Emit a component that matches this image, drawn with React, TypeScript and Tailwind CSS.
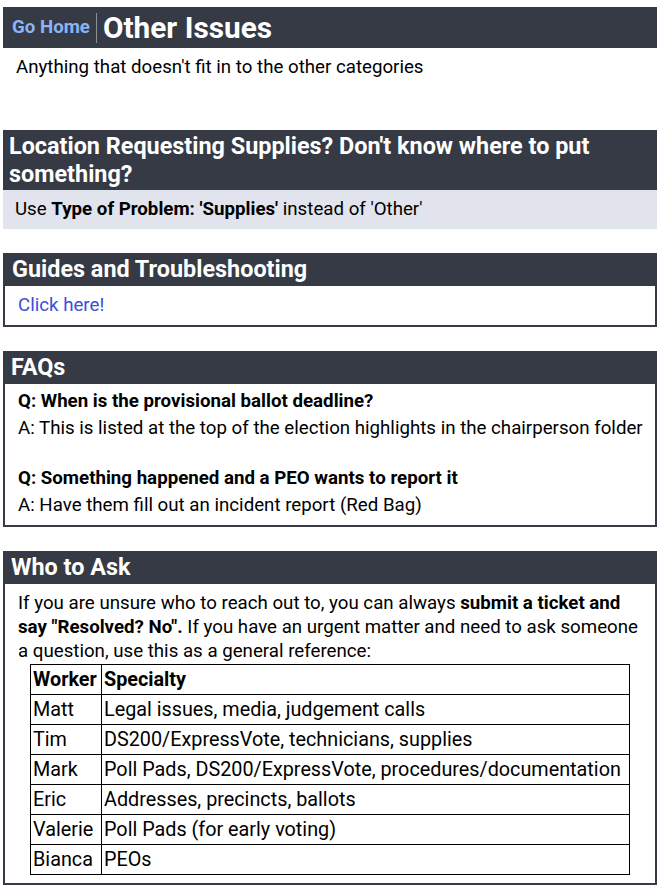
import React from "react";

const rows: [string, string][] = [
  ["Matt", "Legal issues, media, judgement calls"],
  ["Tim", "DS200/ExpressVote, technicians, supplies"],
  ["Mark", "Poll Pads, DS200/ExpressVote, procedures/documentation"],
  ["Eric", "Addresses, precincts, ballots"],
  ["Valerie", "Poll Pads (for early voting)"],
  ["Bianca", "PEOs"],
];

export default function App() {
  return (
    <div
      className="w-[662px] min-h-[896px] bg-white text-black"
      style={{ fontFamily: "Roboto, 'Noto Sans', sans-serif" }}
    >
      <div className="pt-[7px] pl-[3px] w-[657px]">
        <div className="h-[41px] bg-[#353a45] flex items-center">
          <span className="pl-[9px] pr-[6px] text-[18.7px] font-bold text-[#8ab4f8] leading-none">Go Home</span>
          <span className="w-[1px] h-[30px] bg-[#8a8e96]" />
          <span className="pl-[6px] text-[29.8px] font-bold text-white leading-none">Other Issues</span>
        </div>
        <p className="pl-[13px] pt-[7px] text-[18.7px] leading-[24px]">
          Anything that doesn't fit in to the other categories
        </p>

        <div className="mt-[51px]">
          <div className="bg-[#353a45] text-white font-bold text-[23.4px] leading-[28px] px-[6px] pt-[2px] pb-[2px]">
            Location Requesting Supplies? Don't know where to put something?
          </div>
          <div className="bg-[#e1e4ec] h-[39px] flex items-center pl-[12px] text-[18.7px]">
            <span>
              Use <b>Type of Problem: 'Supplies'</b> instead of 'Other'
            </span>
          </div>
        </div>

        <div className="mt-[24px]">
          <div className="bg-[#353a45] text-white font-bold text-[23.4px] h-[33px] flex items-center px-[9px]">
            Guides and Troubleshooting
          </div>
          <div className="border-2 border-t-0 border-[#353a45] h-[41px] flex items-center pl-[13px] text-[18.7px]">
            <a className="text-[#3b4fd8]">Click here!</a>
          </div>
        </div>

        <div className="mt-[24px]">
          <div className="bg-[#353a45] text-white font-bold text-[23.4px] h-[33px] flex items-center px-[8px]">
            FAQs
          </div>
          <div className="border-2 border-t-0 border-[#353a45] pl-[13px] pt-[4px] pb-[6px] text-[18.7px] leading-[27px]">
            <div className="font-bold">Q: When is the provisional ballot deadline?</div>
            <div>A: This is listed at the top of the election highlights in the chairperson folder</div>
            <div className="h-[23px]" />
            <div className="font-bold">Q: Something happened and a PEO wants to report it</div>
            <div>A: Have them fill out an incident report (Red Bag)</div>
          </div>
        </div>

        <div className="mt-[24px]">
          <div className="bg-[#353a45] text-white font-bold text-[23.4px] h-[33px] flex items-center px-[8px]">
            Who to Ask
          </div>
          <div className="border-2 border-t-0 border-[#353a45] pl-[13px] pr-[8px] pt-[7px] pb-[8px] text-[18.7px] leading-[24px]">
            <p>
              If you are unsure who to reach out to, you can always <b>submit a ticket and</b>{" "}
              <b>say "Resolved? No".</b> If you have an urgent matter and need to ask someone a question, use this as a
              general reference:
            </p>
            <table className="mt-[1px] ml-[12px] w-[600px] table-fixed border-collapse border border-black text-[19.8px] whitespace-nowrap">
              <colgroup>
                <col className="w-[71px]" />
                <col />
              </colgroup>
              <thead>
                <tr className="h-[30px]">
                  <th className="border border-black text-left font-bold px-[2px]">Worker</th>
                  <th className="border border-black text-left font-bold px-[2px]">Specialty</th>
                </tr>
              </thead>
              <tbody>
                {rows.map(([w, s]) => (
                  <tr key={w} className="h-[30px]">
                    <td className="border border-black px-[2px] overflow-visible">{w}</td>
                    <td className="border border-black px-[2px] overflow-visible">{s}</td>
                  </tr>
                ))}
              </tbody>
            </table>
          </div>
        </div>
      </div>
    </div>
  );
}
